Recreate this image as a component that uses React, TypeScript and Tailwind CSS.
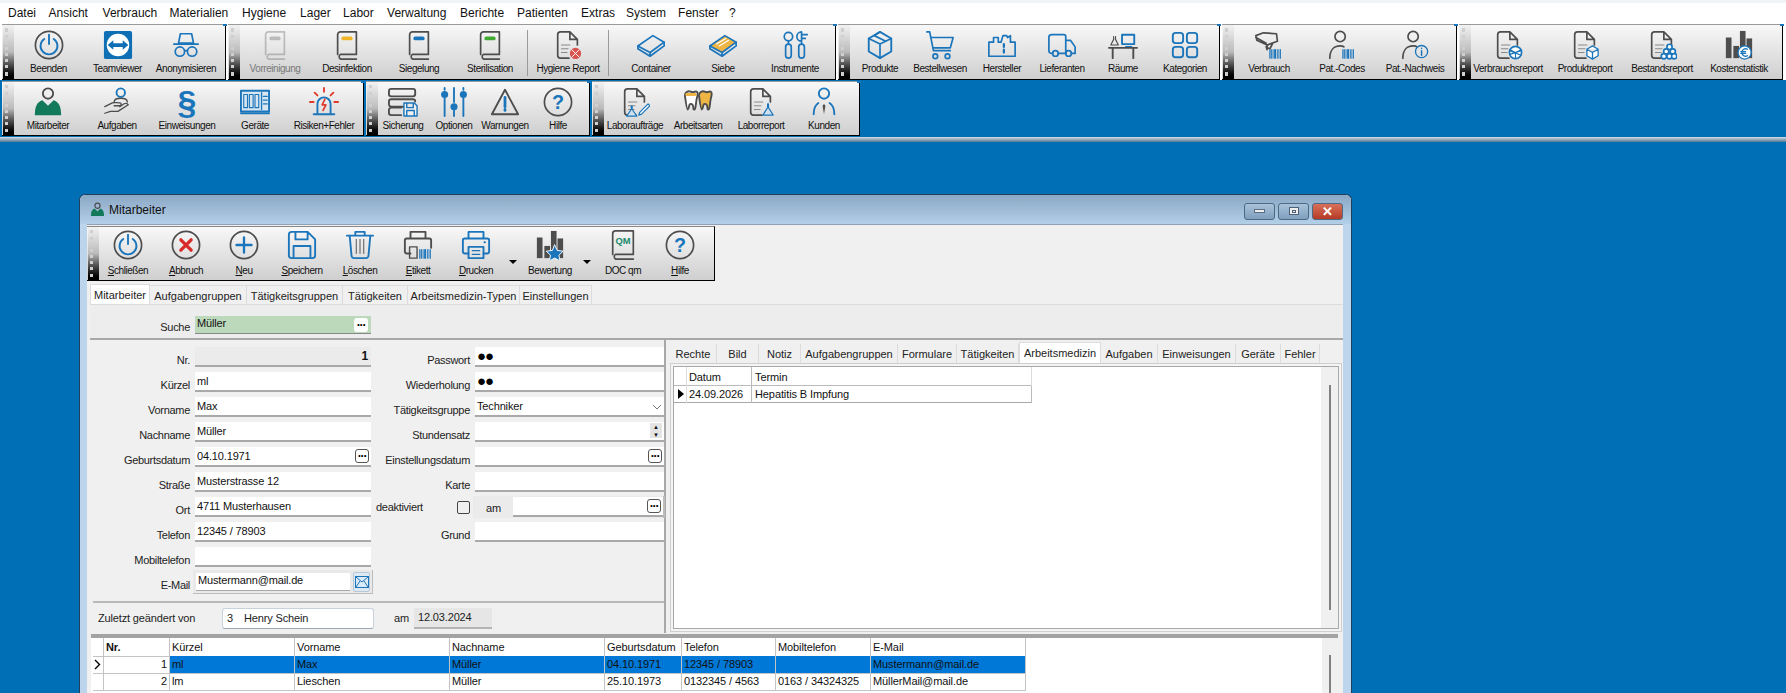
import React from 'react'

const G = '#4d4d4d'
const B = '#1b75bb'

const Svg = ({ children, size = 30 }: { children: React.ReactNode; size?: number }) => (
  <svg width={size} height={size} viewBox="0 0 32 32" fill="none" strokeWidth="1.8" strokeLinecap="round" strokeLinejoin="round">
    {children}
  </svg>
)

const Power = () => (
  <Svg><circle cx="16" cy="16" r="14.500" stroke={G} strokeWidth="1.800" /><path d="M11 9.5a9 9 0 1 0 10 0M16 5v10" stroke={B} strokeWidth="2" /></Svg>
)
const Teamviewer = () => (
  <Svg>
    <rect x="1" y="1" width="30" height="30" rx="2" fill="#0e6fb5" />
    <circle cx="16" cy="16" r="12" fill="#fff" />
    <path d="M5 16l6-5v3h10v-3l6 5-6 5v-3H11v3z" fill="#0e6fb5" />
  </Svg>
)
const Anon = () => (
  <Svg>
    <path d="M10 4h12l2 10H8zM3 15h26" stroke={B} />
    <circle cx="9.5" cy="23" r="5" stroke={B} /><circle cx="22.5" cy="23" r="5" stroke={B} />
    <path d="M14.5 22h3" stroke={B} />
  </Svg>
)
const Book = ({ c, s = G }: { c: string; s?: string }) => (
  <Svg>
    <path d="M6 26V5a3 3 0 0 1 3-3h17v24H9a3 3 0 0 0 0 5h17" stroke={s} strokeWidth="1.8" />
    <rect x="10" y="7" width="12" height="4" rx="2" fill={c} />
  </Svg>
)
const Doc = ({ children }: { children?: React.ReactNode }) => (
  <Svg>
    <path d="M18 2H8a3 3 0 0 0-3 3v22a3 3 0 0 0 3 3h9M18 2l8 8v6M18 2v8h8" stroke={G} />
    <path d="M9 16h9M9 20h7M9 24h6" stroke="#8a8a8a" strokeWidth="1.2" />
    {children}
  </Svg>
)
const HygReport = () => (
  <Doc><circle cx="24" cy="25" r="6" fill="#d9534f" /><path d="M20 29l8-8M20 21l8 8" stroke="#fff" strokeWidth="1" /></Doc>
)
const Tray = ({ fill = 'none' }: { fill?: string }) => (
  <Svg>
    <path d="M2 17L18 6l12 7-15 11z" stroke={B} fill={fill} />
    <path d="M2 17v3l13 8 15-11v-4M15 24v4" stroke={B} />
    {fill !== 'none' && <path d="M9 15l10-6M12 17l10-6" stroke="#fff" strokeWidth="1.2" />}
  </Svg>
)
const Instr = () => (
  <Svg>
    <circle cx="9" cy="7" r="4.5" stroke={B} /><rect x="6" y="15" width="6" height="15" rx="3" stroke={B} />
    <path d="M9 11.5V15" stroke={B} />
    <path d="M23 2a5 5 0 0 0 0 10zM23 5h6M23 9h4M23 12v3" stroke={B} />
    <rect x="20" y="15" width="6" height="15" rx="3" stroke={B} />
  </Svg>
)
const Cube = () => (
  <Svg>
    <path d="M16 2l12 7v14l-12 7-12-7V9z" stroke={B} strokeWidth="2" />
    <path d="M4 9l12 6 12-6M16 15v15M16 2l-6 4 12 6" stroke={B} />
  </Svg>
)
const Cart = () => (
  <Svg>
    <path d="M2 2h3l4 20h18M7 8h23l-3 11H9" stroke={B} />
    <circle cx="11" cy="28" r="2.5" stroke={B} /><circle cx="24" cy="28" r="2.5" stroke={B} />
  </Svg>
)
const Factory = () => (
  <Svg>
    <path d="M2 28V13h5V8h5v5h3l2-7h4l1 2 3-2v7h5v15z" stroke={B} />
    <path d="M18 15v3M18 21v3" stroke={B} strokeWidth="2.4" />
  </Svg>
)
const Truck = () => (
  <Svg>
    <path d="M6 25H5a3 3 0 0 1-3-3V8a3 3 0 0 1 3-3h13a2 2 0 0 1 2 2v18h-8M20 11h5l5 7v7h-4" stroke={B} />
    <circle cx="9" cy="25" r="3" stroke={B} /><circle cx="23" cy="25" r="3" stroke={B} />
  </Svg>
)
const Room = () => (
  <Svg>
    <rect x="15" y="5" width="13" height="10" stroke={B} strokeWidth="2" />
    <path d="M19 18h6" stroke={B} />
    <path d="M1 19h30M5 19v11M27 19v11" stroke={G} strokeWidth="2" />
    <path d="M6 7v3l-3 6h8l-3-6V7" stroke={G} strokeWidth="1.2" />
  </Svg>
)
const Cats = () => (
  <Svg>
    <rect x="3" y="3" width="11" height="11" rx="3" stroke={B} strokeWidth="2" />
    <rect x="18" y="3" width="11" height="11" rx="3" stroke={B} strokeWidth="2" />
    <rect x="3" y="18" width="11" height="11" rx="3" stroke={B} strokeWidth="2" />
    <rect x="18" y="18" width="11" height="11" rx="3" stroke={B} strokeWidth="2" />
  </Svg>
)
const Barcode = ({ x = 17 }: { x?: number }) => (
  <path d={`M${x} 21v9M${x + 2} 21v9M${x + 4.5} 21v9M${x + 6} 21v9M${x + 8.5} 21v9M${x + 11} 21v9`} stroke={B} strokeWidth="1.4" />
)
const Scanner = () => (
  <Svg>
    <path d="M2 6l8-3 14 1 1 8-11 4-11-5zM2 8l11 6M14 16l6-2-3 6-3-1zM15 16l-2 2 1 3" stroke={G} />
    <Barcode />
  </Svg>
)
const PatCode = () => (
  <Svg>
    <circle cx="14" cy="7" r="5.5" stroke={G} />
    <path d="M3 30c0-8 4-13 11-13 2 0 3 0 4 1" stroke={G} />
    <Barcode />
  </Svg>
)
const PatInfo = () => (
  <Svg>
    <circle cx="14" cy="7" r="5.5" stroke={G} />
    <path d="M3 30c0-8 4-13 11-13 2 0 3 0 4 1" stroke={G} />
    <circle cx="23" cy="23" r="6.5" stroke={B} strokeWidth="1.4" />
    <path d="M23 22v5M23 19.5v.2" stroke={B} strokeWidth="1.6" />
  </Svg>
)
const DocBox = () => (
  <Doc>
    <circle cx="24" cy="24" r="6.5" fill="#fff" stroke={B} />
    <path d="M18 21l6 3 6-3M24 24v6M18 26l12-4M18 22l12 5" stroke={B} strokeWidth="1.2" />
  </Doc>
)
const DocCube = () => (
  <Doc>
    <path d="M24 17l6 3.5v7L24 31l-6-3.500v-7zM18 20.500l6 3.500 6-3.500M24 24v7" stroke={B} fill="#fff" strokeWidth="1.4" />
  </Doc>
)
const DocStack = () => (
  <Doc>
    <circle cx="24" cy="18" r="2.800" stroke={B} fill="#fff" /><circle cx="20.500" cy="23" r="2.800" stroke={B} fill="#fff" />
    <circle cx="27.500" cy="23" r="2.800" stroke={B} fill="#fff" /><circle cx="18" cy="28" r="2.800" stroke={B} fill="#fff" />
    <circle cx="24" cy="28" r="2.800" stroke={B} fill="#fff" /><circle cx="29" cy="28" r="2.800" stroke={B} fill="#fff" />
  </Doc>
)
const Bars = ({ children }: { children?: React.ReactNode }) => (
  <Svg>
    <rect x="2" y="8" width="6" height="22" fill={G} /><rect x="10" y="17" width="6" height="13" fill={G} />
    <rect x="17" y="1" width="6" height="29" fill={G} /><rect x="24" y="9" width="6" height="21" fill={G} />
    {children}
  </Svg>
)
const Euro = () => (
  <Bars>
    <circle cx="22" cy="24" r="7" fill="#fff" stroke={B} strokeWidth="1.4" />
    <path d="M25 20.500a4 4 0 1 0 0 7M18 23h5M18 25h5" stroke={B} strokeWidth="1.4" />
  </Bars>
)
const Star = () => (
  <Bars><path d="M21 16l2.800 5.800 6.200.8-4.500 4.300 1.100 6-5.600-3-5.600 3 1.100-6-4.500-4.300 6.200-.8z" fill={B} stroke="#fff" strokeWidth="1" /></Bars>
)
const Worker = () => (
  <Svg>
    <circle cx="16" cy="7" r="5.500" stroke={G} strokeWidth="2" />
    <path d="M2 30c0-9 2-14 8-16l6 6 6-6c6 2 8 7 8 16z" fill="#127a5a" />
  </Svg>
)
const Hand = () => (
  <Svg>
    <circle cx="20" cy="6" r="4.500" stroke={B} strokeWidth="2" />
    <path d="M13 16c0-3 3-4 7-4s7 1 7 4M3 21l8-4c3-1 5 0 8 0 2 0 2 3 0 3h-6M3 28l6-2h8l11-7c-1-2-4-2-6 0l-3 2" stroke={G} strokeWidth="1.400" />
  </Svg>
)
const Paragraph = () => (
  <div className="h-[30px] flex items-center justify-center font-bold text-[34px] leading-[30px] text-[#1b75bb]">§</div>
)
const Oven = () => (
  <Svg>
    <rect x="1" y="4" width="30" height="22" stroke={B} strokeWidth="2" fill="#d8e6f2" />
    <path d="M1 28h30" stroke={B} strokeWidth="2" />
    <rect x="4" y="8" width="4" height="14" stroke={B} strokeWidth="1.200" />
    <rect x="10" y="8" width="4" height="14" stroke={B} strokeWidth="1.200" />
    <rect x="16" y="8" width="4" height="14" stroke={B} strokeWidth="1.200" />
    <path d="M23 6v18M25 10h4M25 14h4M25 18h4" stroke={B} strokeWidth="1.400" />
  </Svg>
)
const Alarm = () => (
  <Svg>
    <path d="M9 28V18a7 7 0 0 1 14 0v10M5 29h22" stroke={B} strokeWidth="2" />
    <path d="M17 13l-3 6h4l-3 6" stroke="#e03a2e" strokeWidth="1.800" />
    <path d="M16 1v4M6 6l3 3M26 6l-3 3M1 16h4M27 16h4" stroke="#e03a2e" strokeWidth="2" />
  </Svg>
)
const Backup = () => (
  <Svg>
    <rect x="1" y="2" width="28" height="8" rx="2.500" stroke={G} strokeWidth="2" />
    <path d="M18 21H3.500A2.500 2.500 0 0 1 1 18.500v-3A2.500 2.500 0 0 1 3.500 13H26.500A2.500 2.500 0 0 1 29 15.500M14 30H3.500A2.500 2.500 0 0 1 1 27.500v-3A2.500 2.500 0 0 1 3.500 22H14" stroke={G} strokeWidth="2" />
    <path d="M17 17h11l3 3v11H17zM20 17v5h7v-5M20 31v-6h8v6" stroke={B} strokeWidth="1.500" fill="#f0f0f0" />
  </Svg>
)
const Sliders = () => (
  <Svg>
    <path d="M6 1v2M6 12v19M16 1v15M16 25v6M26 1v2M26 12v19" stroke={B} strokeWidth="2" />
    <circle cx="6" cy="8" r="3.800" fill={B} /><circle cx="16" cy="21" r="3.800" fill={B} /><circle cx="26" cy="8" r="3.800" fill={B} />
  </Svg>
)
const Warn = () => (
  <Svg>
    <path d="M16 3L30 29H2z" stroke={G} strokeWidth="2" />
    <path d="M16 11v10M16 24v1" stroke={B} strokeWidth="3" />
  </Svg>
)
const Help = () => (
  <Svg>
    <circle cx="16" cy="16" r="14.500" stroke={G} strokeWidth="1.800" />
    <text x="16" y="23" textAnchor="middle" fontSize="21" fontWeight="700" fontFamily="Liberation Sans, sans-serif" fill={B}>?</text>
  </Svg>
)
const LabOrder = () => (
  <Doc>
    <path d="M12 20v4l-5 7h11l-5-7v-4" stroke={B} fill="#cfe0ee" strokeWidth="1.200" />
    <path d="M21 27l9-9 2 2-9 9-3 1z" stroke={B} strokeWidth="1.300" fill="#fff" />
  </Doc>
)
const Teeth = () => (
  <Svg>
    <path d="M2 9c0-4 4-5 6-4 2 1 3 1 5 0 3-1 3 3 2 6-1 3-1 8-2 12-1 2-2 1-2-1 0-2-1-4-3-4s-1 5-3 6c-1 0-2-8-3-15z" stroke={G} strokeWidth="2" fill="#fff" />
    <path d="M17 9c0-4 4-5 6-4 2 1 3 1 5 0 3-1 3 3 2 6-1 3-1 8-2 12-1 2-2 1-2-1 0-2-1-4-3-4s-1 5-3 6c-1 0-2-8-3-15z" stroke={G} strokeWidth="2" fill="#eeb544" />
    <path d="M4 8h9" stroke="#eeb544" strokeWidth="3" />
  </Svg>
)
const LabReport = () => (
  <Doc><path d="M23 18v4l-5 8h11l-5-8v-4" stroke={B} fill="#cfe0ee" strokeWidth="1.200" /></Doc>
)
const Customer = () => (
  <Svg>
    <circle cx="16" cy="7" r="5.500" stroke={B} strokeWidth="2" />
    <path d="M5 29c0-6 2-10 5-12M27 29c0-6-2-10-5-12" stroke={B} strokeWidth="2" />
    <path d="M16 18l-1.500 2 1.500 9 1.500-9z" fill={G} />
  </Svg>
)
const Cancel = () => (
  <Svg>
    <circle cx="16" cy="16" r="14.500" stroke={G} strokeWidth="1.800" />
    <path d="M10.500 10.500l11 11M21.500 10.500l-11 11" stroke="#d92a2a" strokeWidth="3.500" />
  </Svg>
)
const Plus = () => (
  <Svg>
    <circle cx="16" cy="16" r="14.500" stroke={G} strokeWidth="1.800" />
    <path d="M16 8v16M8 16h16" stroke={B} strokeWidth="2.500" />
  </Svg>
)
const Floppy = () => (
  <Svg>
    <path d="M2 5a3 3 0 0 1 3-3h17l8 8v17a3 3 0 0 1-3 3H5a3 3 0 0 1-3-3zM9 2v8h13V2M7 30V17h18v13" stroke={B} strokeWidth="2" />
  </Svg>
)
const Trash = () => (
  <Svg>
    <path d="M2 6h28M11 6V2h10v4M5 6l2 22a3 3 0 0 0 3 2h12a3 3 0 0 0 3-2l2-22" stroke={B} strokeWidth="2" />
    <path d="M12 10v15M16 10v15M20 10v15" stroke={G} strokeWidth="1" />
  </Svg>
)
const Printer = ({ c = B }: { c?: string }) => (
  <Svg>
    <path d="M8 9V2h16v7M8 25H4a2 2 0 0 1-2-2V11a2 2 0 0 1 2-2h24a2 2 0 0 1 2 2v12a2 2 0 0 1-2 2h-4" stroke={c} strokeWidth="2" />
    <rect x="8" y="18" width="16" height="12" stroke={c} strokeWidth="2" />
    <path d="M12 22h8M12 26h8" stroke={c} strokeWidth="1.200" />
    <path d="M25 13h.5" stroke={c} strokeWidth="2" />
  </Svg>
)
const Label = () => (
  <Svg>
    <path d="M8 9V2h16v7M8 25H4a2 2 0 0 1-2-2V11a2 2 0 0 1 2-2h24a2 2 0 0 1 2 2v8" stroke={G} strokeWidth="2" />
    <path d="M7 18v12h8V18z" stroke={G} strokeWidth="1.500" />
    <Barcode x={18} />
  </Svg>
)
const DocQm = () => (
  <Svg>
    <path d="M5 26V4a3 3 0 0 1 3-3h19v25H8a3 3 0 0 0 0 5h19" stroke={G} strokeWidth="1.800" />
    <text x="16" y="15" textAnchor="middle" fontSize="10" fontWeight="700" fontFamily="Liberation Sans, sans-serif" fill="#1b8a6b">QM</text>
  </Svg>
)

// toolbar button: width class places the label under its icon
const ToolBtn = ({ w, label, icon, dim, u, win }: { w: string; label: string; icon: React.ReactNode; dim?: boolean; u?: boolean; win?: boolean }) => (
  <div className={`${w} shrink-0 flex flex-col items-center ${win ? 'pt-[3px]' : 'pt-[5px]'} ${dim ? 'opacity-50' : ''}`}>
    <div className="h-[30px] flex items-center justify-center">{icon}</div>
    <span className={`${win ? 'mt-[4px]' : 'mt-[2px]'} text-[10px] leading-[13px] tracking-[-0.45px] text-[#111] whitespace-nowrap`}>
      {u ? <><span className="underline">{label[0]}</span>{label.slice(1)}</> : label}
    </span>
  </div>
)

const Grip = () => (
  <div className="w-[11px] shrink-0 ml-[1px] bg-linear-to-b from-[#f2f2f2] via-[#bbbbbb] to-black flex justify-start pl-[2px] py-[3px]">
    <div className="w-0 h-full border-l-[3px] border-dotted border-[#cfcfcf]" />
  </div>
)

const Sep = () => <div className="w-px h-[46px] mt-[5px] mx-[1px] shrink-0 bg-[#9a9a9a]" />

const Band = ({ w, children }: { w: string; children: React.ReactNode }) => (
  <div className={`${w} shrink-0 relative flex bg-linear-to-b from-[#f8f8f8] to-[#cfcfcf] border-t border-[#9a9a9a] border-r border-b border-r-black border-b-black`}>
    <Grip />
    {children}
    <div className="absolute -top-px -right-[2px] w-[4px] h-[2px] bg-[#1b75bb]" />
  </div>
)

const Menu = () => (
  <div className="h-[23px] shrink-0 bg-white border-t-[3px] border-[#f0f4f9] flex items-center pl-[8px] text-[12px] text-[#111]">
    <span className="w-[40.6px]">Datei</span>
    <span className="w-[54px]">Ansicht</span>
    <span className="w-[67px]">Verbrauch</span>
    <span className="w-[72.5px]">Materialien</span>
    <span className="w-[58px]">Hygiene</span>
    <span className="w-[43px]">Lager</span>
    <span className="w-[44px]">Labor</span>
    <span className="w-[73px]">Verwaltung</span>
    <span className="w-[57px]">Berichte</span>
    <span className="w-[64px]">Patienten</span>
    <span className="w-[45px]">Extras</span>
    <span className="w-[52px]">System</span>
    <span className="w-[51px]">Fenster</span>
    <span>?</span>
  </div>
)

const Toolbars = () => (
  <div className="shrink-0 flex flex-col gap-px h-[114px]">
    <div className="flex gap-[2px] h-[57px] pt-px bg-white pl-[2px]">
      <Band w="w-[224px]">
        <ToolBtn w="w-[69px]" label="Beenden" icon={<Power />} />
        <ToolBtn w="w-[69px]" label="Teamviewer" icon={<Teamviewer />} />
        <ToolBtn w="w-[68px]" label="Anonymisieren" icon={<Anon />} />
      </Band>
      <Band w="w-[608px]">
        <ToolBtn w="w-[70px]" label="Vorreinigung" icon={<Book c="#888" s="#888" />} dim />
        <ToolBtn w="w-[74px]" label="Desinfektion" icon={<Book c="#f0b429" />} />
        <ToolBtn w="w-[70px]" label="Siegelung" icon={<Book c="#1b75bb" />} />
        <ToolBtn w="w-[72px]" label="Sterilisation" icon={<Book c="#43a935" />} />
        <Sep />
        <ToolBtn w="w-[78px]" label="Hygiene Report" icon={<HygReport />} />
        <Sep />
        <ToolBtn w="w-[82px]" label="Container" icon={<Tray />} />
        <ToolBtn w="w-[62px]" label="Siebe" icon={<Tray fill="#eeb544" />} />
        <ToolBtn w="w-[82px]" label="Instrumente" icon={<Instr />} />
      </Band>
      <Band w="w-[382px]">
        <ToolBtn w="w-[60px]" label="Produkte" icon={<Cube />} />
        <ToolBtn w="w-[60px]" label="Bestellwesen" icon={<Cart />} />
        <ToolBtn w="w-[64px]" label="Hersteller" icon={<Factory />} />
        <ToolBtn w="w-[56px]" label="Lieferanten" icon={<Truck />} />
        <ToolBtn w="w-[66px]" label="Räume" icon={<Room />} />
        <ToolBtn w="w-[58px]" label="Kategorien" icon={<Cats />} />
      </Band>
      <Band w="w-[235px]">
        <ToolBtn w="w-[70px]" label="Verbrauch" icon={<Scanner />} />
        <ToolBtn w="w-[76px]" label="Pat.-Codes" icon={<PatCode />} />
        <ToolBtn w="w-[70px]" label="Pat.-Nachweis" icon={<PatInfo />} />
      </Band>
      <Band w="w-[324px]">
        <ToolBtn w="w-[74px]" label="Verbrauchsreport" icon={<DocBox />} />
        <ToolBtn w="w-[80px]" label="Produktreport" icon={<DocCube />} />
        <ToolBtn w="w-[74px]" label="Bestandsreport" icon={<DocStack />} />
        <ToolBtn w="w-[80px]" label="Kostenstatistik" icon={<Euro />} />
      </Band>
    </div>
    <div className="flex gap-[2px] h-[55px] pl-[2px]">
      <Band w="w-[362px]">
        <ToolBtn w="w-[68px]" label="Mitarbeiter" icon={<Worker />} />
        <ToolBtn w="w-[70px]" label="Aufgaben" icon={<Hand />} />
        <ToolBtn w="w-[70px]" label="Einweisungen" icon={<Paragraph />} />
        <ToolBtn w="w-[66px]" label="Geräte" icon={<Oven />} />
        <ToolBtn w="w-[72px]" label="Risiken+Fehler" icon={<Alarm />} />
      </Band>
      <Band w="w-[224px]">
        <ToolBtn w="w-[50px]" label="Sicherung" icon={<Backup />} />
        <ToolBtn w="w-[52px]" label="Optionen" icon={<Sliders />} />
        <ToolBtn w="w-[50px]" label="Warnungen" icon={<Warn />} />
        <ToolBtn w="w-[56px]" label="Hilfe" icon={<Help />} />
      </Band>
      <Band w="w-[268px]">
        <ToolBtn w="w-[62px]" label="Laboraufträge" icon={<LabOrder />} />
        <ToolBtn w="w-[64px]" label="Arbeitsarten" icon={<Teeth />} />
        <ToolBtn w="w-[62px]" label="Laborreport" icon={<LabReport />} />
        <ToolBtn w="w-[64px]" label="Kunden" icon={<Customer />} />
      </Band>
    </div>
  </div>
)

const Dots = ({ className = '' }: { className?: string }) => (
  <span className={`w-[14px] h-[14px] shrink-0 flex items-center justify-center rounded-[3px] bg-white border border-[#555] text-[12px] leading-none font-bold text-black ${className}`}>
    <span className="-mt-[6px] tracking-[-0.5px]">...</span>
  </span>
)

const Input = ({ w = 'w-[176px]', children, right, align, bg = 'bg-white' }: { w?: string; children?: React.ReactNode; right?: React.ReactNode; align?: string; bg?: string }) => (
  <div className={`${w} ${bg} h-[20px] shrink-0 flex items-start justify-between pl-[2px] pr-[2px] pt-[2px] border-b-2 border-[#a9a9a9] text-[11px] leading-[14px] tracking-[-0.15px] text-[#111] ${align ?? ''}`}>
    <span>{children}</span>
    {right}
  </div>
)

const Row = ({ label, lw = 'w-[97px]', children }: { label: string; lw?: string; children: React.ReactNode }) => (
  <div className="flex h-[20px] gap-[5px]">
    <span className={`${lw} shrink-0 text-right text-[11px] tracking-[-0.3px] leading-[14px] pt-[6px] text-[#222] whitespace-nowrap`}>{label}</span>
    {children}
  </div>
)

const Pw = () => <span className="text-[15px] leading-[13px] tracking-[-1px] text-black">●●</span>

const Form = () => (
  <div className="h-[258px] shrink-0 flex gap-[5px] pt-[7px] bg-[#f0f0f0]">
    <div className="flex flex-col gap-[5px]">
      <Row label="Nr."><Input bg="bg-[#ebebeb]" right={<span className="font-bold text-[12px] pr-[1px]">1</span>} /></Row>
      <Row label="Kürzel"><Input>ml</Input></Row>
      <Row label="Vorname"><Input>Max</Input></Row>
      <Row label="Nachname"><Input>Müller</Input></Row>
      <Row label="Geburtsdatum"><Input right={<Dots />}>04.10.1971</Input></Row>
      <Row label="Straße"><Input>Musterstrasse 12</Input></Row>
      <Row label="Ort"><Input>4711 Musterhausen</Input></Row>
      <Row label="Telefon"><Input>12345 / 78903</Input></Row>
      <Row label="Mobiltelefon"><Input /></Row>
      <Row label="E-Mail">
        <div className="w-[180px] -ml-[2px] -mr-[2px] -mt-[2px] h-[24px] flex items-center gap-[3px] pl-[3px] border-b border-r border-[#bdbdbd] bg-[#e9e9e9]">
          <div className="w-[154px] h-[18px] bg-white border-b border-[#a9a9a9] pl-[2px] text-[11px] leading-[14px] tracking-[-0.15px] text-[#111]">Mustermann@mail.de</div>
          <div className="w-[17px] h-[20px] flex items-center justify-center bg-[#dfe9f2] rounded-[2px] border border-[#b5c7d8]">
            <svg width="14" height="12" viewBox="0 0 14 12" fill="#dcebf7" stroke="#1b75bb"><rect x="0.500" y="0.500" width="13" height="11" /><path d="M1 1l6 5 6-5M1 11l4-6M13 11L9 5" fill="none" /></svg>
          </div>
        </div>
      </Row>
    </div>
    <div className="flex flex-col gap-[5px]">
      <Row label="Passwort" lw="w-[94px]"><Input w="w-[189px]"><Pw /></Input></Row>
      <Row label="Wiederholung" lw="w-[94px]"><Input w="w-[189px]"><Pw /></Input></Row>
      <Row label="Tätigkeitsgruppe" lw="w-[94px]">
        <Input w="w-[189px]" right={<svg width="10" height="14" viewBox="0 0 10 14" fill="none" stroke="#777"><path d="M1 6l4 4 4-4" /></svg>}>Techniker</Input>
      </Row>
      <Row label="Stundensatz" lw="w-[94px]">
        <Input w="w-[189px]" right={
          <span className="w-[12px] h-[15px] -mt-[1px] flex flex-col bg-[#e4e4e4] text-[6px] leading-[8px] text-center text-[#111]"><span>▲</span><span>▼</span></span>
        } />
      </Row>
      <Row label="Einstellungsdatum" lw="w-[94px]"><Input w="w-[189px]" right={<Dots />} /></Row>
      <Row label="Karte" lw="w-[94px]"><Input w="w-[189px]" /></Row>
      <div className="flex h-[20px] items-center">
        <span className="w-[81px] text-[11px] tracking-[-0.3px] text-[#222]">deaktiviert</span>
        <span className="w-[13px] h-[13px] shrink-0 rounded-[2px] border border-[#444] bg-[#f0f0f0]" />
        <div className="ml-[3px] w-[192px] h-[22px] flex items-center border-r-2 border-[#bdbdbd] bg-[#ebebeb]">
          <span className="w-[40px] pl-[13px] pt-[3px] text-[11px] text-[#222]">am</span>
          <Input w="w-[150px]" right={<Dots />} />
        </div>
      </div>
      <Row label="Grund" lw="w-[94px]"><Input w="w-[189px]" /></Row>
    </div>
  </div>
)

const Changed = () => (
  <div className="h-[32px] mt-[3px] flex items-center pl-[5px] border-t-2 border-[#b9b9b9] text-[11px] tracking-[-0.15px] text-[#222]">
    <span className="w-[124px]">Zuletzt geändert von</span>
    <div className="w-[152px] h-[21px] flex items-center pl-[4px] gap-[11px] rounded-[3px] bg-white border border-[#c8d2dc] border-b-[#9aa9b8]">
      <span>3</span><span>Henry Schein</span>
    </div>
    <span className="ml-[20px] w-[20px]">am</span>
    <div className="w-[78px] h-[21px] flex items-center pl-[4px] bg-[#e6e6e6] border-b-2 border-[#b5b5b5]">12.03.2024</div>
  </div>
)

const subTabs = [
  { t: 'Rechte', w: 'w-[47px]' }, { t: 'Bild', w: 'w-[42px]' }, { t: 'Notiz', w: 'w-[42px]' },
  { t: 'Aufgabengruppen', w: 'w-[97px]' }, { t: 'Formulare', w: 'w-[59px]' }, { t: 'Tätigkeiten', w: 'w-[62px]' },
  { t: 'Arbeitsmedizin', w: 'w-[82px]', on: true }, { t: 'Aufgaben', w: 'w-[57px]' }, { t: 'Einweisungen', w: 'w-[78px]' },
  { t: 'Geräte', w: 'w-[45px]' }, { t: 'Fehler', w: 'w-[39px]' },
]

const DetailPanel = () => (
  <div className="flex-1 pl-[4px] pt-[4px] pr-[1px] flex flex-col">
    <div className="h-[19px] shrink-0 flex items-stretch">
      {subTabs.map((s) => (
        <span key={s.t} className={`${s.w} shrink-0 text-center text-[11px] leading-[20px] text-[#222] border-r border-[#dcdcdc] ${s.on ? '-mt-[2px] bg-white border-t border-l border-[#cfcfcf]' : ''}`}>{s.t}</span>
      ))}
    </div>
    <div className="h-[269px] shrink-0 p-[2px] border border-[#cfcfcf] bg-[#f4f4f4]">
      <div className="h-full flex bg-white border border-[#a8a8a8]">
        <div className="w-[358px] text-[11px] tracking-[-0.1px] text-[#111]">
          <div className="grid grid-cols-[13px_65px_280px] h-[19px] border-b border-[#bbbbbb]">
            <span className="border-r border-[#dcdcdc]" />
            <span className="pl-[2px] pt-[2px] border-r border-[#bbbbbb]">Datum</span>
            <span className="pl-[3px] pt-[2px] border-r border-[#dcdcdc]">Termin</span>
          </div>
          <div className="grid grid-cols-[13px_65px_280px] h-[17px] border-b border-[#a8a8a8]">
            <span className="border-r border-[#dcdcdc] flex items-center pl-[4px]"><span className="w-0 h-0 border-y-[5px] border-y-transparent border-l-[6px] border-l-black" /></span>
            <span className="pl-[2px] border-r border-[#bbbbbb]">24.09.2026</span>
            <span className="pl-[3px] border-r border-[#bbbbbb]">Hepatitis B Impfung</span>
          </div>
        </div>
        <div className="flex-1" />
        <div className="w-[17px] shrink-0 bg-[#f0f0f0] flex justify-center pt-[18px] pb-[18px]">
          <div className="w-[2px] h-[225px] bg-[#808080]" />
        </div>
      </div>
    </div>
  </div>
)

const gridCols = 'grid grid-cols-[11px_66px_125px_155px_155px_77px_94px_95px_155px]'
const cell = 'px-[2px] border-r border-b border-[#c4c4c4] whitespace-nowrap'

const Chevron = () => (
  <svg width="7" height="11" viewBox="0 0 7 11" fill="none" stroke="#000" strokeWidth="1.400"><path d="M1 1l4.500 4.500L1 10" /></svg>
)

const EmployeeGrid = () => (
  <div className="flex ml-px mr-[5px] mt-px h-[59px] shrink-0 bg-white border-t-4 border-[#a3a3a3] text-[11px] tracking-[-0.1px] text-[#111]">
    <div className="w-[933px] ml-[2px] shrink-0">
      <div className={`${gridCols} h-[18px] items-stretch leading-[18px]`}>
        <span className={cell} />
        <span className={`${cell} font-bold`}>Nr.</span>
        <span className={cell}>Kürzel</span><span className={cell}>Vorname</span><span className={cell}>Nachname</span>
        <span className={cell}>Geburtsdatum</span><span className={cell}>Telefon</span><span className={cell}>Mobiltelefon</span><span className={cell}>E-Mail</span>
      </div>
      <div className={`${gridCols} h-[17px] leading-[17px]`}>
        <span className={`${cell} flex items-center !px-[1px]`}><Chevron /></span>
        <span className={`${cell} text-right`}>1</span>
        <span className={`${cell} bg-[#0078d7]`}>ml</span><span className={`${cell} bg-[#0078d7]`}>Max</span><span className={`${cell} bg-[#0078d7]`}>Müller</span>
        <span className={`${cell} bg-[#0078d7]`}>04.10.1971</span><span className={`${cell} bg-[#0078d7]`}>12345 / 78903</span><span className={`${cell} bg-[#0078d7]`} /><span className={`${cell} bg-[#0078d7]`}>Mustermann@mail.de</span>
      </div>
      <div className={`${gridCols} h-[17px] leading-[17px]`}>
        <span className={cell} />
        <span className={`${cell} text-right`}>2</span>
        <span className={cell}>lm</span><span className={cell}>Lieschen</span><span className={cell}>Müller</span>
        <span className={cell}>25.10.1973</span><span className={cell}>0132345 / 4563</span><span className={cell}>0163 / 34324325</span><span className={cell}>MüllerMail@mail.de</span>
      </div>
    </div>
    <div className="flex-1" />
    <div className="w-[16px] shrink-0 bg-[#f0f0f0] flex justify-center pt-[17px] overflow-hidden">
      <div className="w-[2px] h-[60px] bg-[#808080]" />
    </div>
  </div>
)

const tabs = [
  { t: 'Mitarbeiter', w: 'w-[60px]', on: true }, { t: 'Aufgabengruppen', w: 'w-[97px]' }, { t: 'Tätigkeitsgruppen', w: 'w-[96px]' },
  { t: 'Tätigkeiten', w: 'w-[65px]' }, { t: 'Arbeitsmedizin-Typen', w: 'w-[112px]' }, { t: 'Einstellungen', w: 'w-[72px]' },
]

const WinBtn = ({ className, children }: { className: string; children: React.ReactNode }) => (
  <div className={`w-[31px] h-[17px] rounded-[3px] border border-[#4d6a85] flex items-center justify-center ${className}`}>{children}</div>
)

const DropArrow = ({ w = 'w-[16px]' }: { w?: string }) => (
  <div className={`${w} shrink-0 flex justify-center pt-[33px]`}>
    <span className="w-0 h-0 border-x-[4px] border-x-transparent border-t-[4px] border-t-black" />
  </div>
)

const Window = () => (
  <div className="ml-[79px] mt-[52px] w-[1273px] h-[520px] shrink-0 flex flex-col pl-[7px] pr-[8px] rounded-t-[6px] border-t border-l border-r border-[#1f3f5c] bg-[#bcd5ec]">
    <div className="h-[29px] -ml-[7px] -mr-[8px] pl-[10px] pr-[8px] shrink-0 flex items-center justify-between rounded-t-[6px] bg-linear-to-b from-[#8aa7c4] to-[#b4cfe8]">
      <div className="flex items-center gap-[4px] text-[12px] text-[#111]">
        <svg width="15" height="15" viewBox="0 0 32 32" fill="none"><circle cx="16" cy="8" r="5.500" stroke="#4d4d4d" strokeWidth="2.500" /><path d="M2 30c0-9 2-14 8-16l6 6 6-6c6 2 8 7 8 16z" fill="#127a5a" /></svg>
        <span>Mitarbeiter</span>
      </div>
      <div className="flex gap-[3px] mt-[3px]">
        <WinBtn className="bg-linear-to-b from-[#a9c2da] to-[#7f9fbe]"><span className="w-[11px] h-[4px] bg-[#eee] border border-[#5a6f84]" /></WinBtn>
        <WinBtn className="bg-linear-to-b from-[#a9c2da] to-[#7f9fbe]"><span className="w-[10px] h-[8px] bg-[#eee] border border-[#4d6278] flex items-center justify-center"><span className="w-[4px] h-[3px] border border-[#4d6278]" /></span></WinBtn>
        <WinBtn className="bg-linear-to-b from-[#d9705a] to-[#b53a25] text-white text-[13px] font-bold leading-none">✕</WinBtn>
      </div>
    </div>
    <div className="flex-1 bg-[#f0f0f0] border-t border-[#8fa1b3] pt-px flex flex-col">
      <div className="w-[628px] h-[55px] shrink-0 flex bg-linear-to-b from-[#f8f8f8] to-[#cfcfcf] border-r border-b border-t border-[#888] border-r-black border-b-black">
        <Grip />
        <ToolBtn win w="w-[58px]" label="Schließen" icon={<Power />} u />
        <ToolBtn win w="w-[58px]" label="Abbruch" icon={<Cancel />} u />
        <ToolBtn win w="w-[58px]" label="Neu" icon={<Plus />} u />
        <ToolBtn win w="w-[58px]" label="Speichern" icon={<Floppy />} u />
        <ToolBtn win w="w-[58px]" label="Löschen" icon={<Trash />} u />
        <ToolBtn win w="w-[58px]" label="Etikett" icon={<Label />} u />
        <ToolBtn win w="w-[58px]" label="Drucken" icon={<Printer />} u />
        <DropArrow />
        <ToolBtn win w="w-[58px]" label="Bewertung" icon={<Star />} />
        <DropArrow />
        <ToolBtn win w="w-[56px]" label="DOC qm" icon={<DocQm />} />
        <ToolBtn win w="w-[58px]" label="Hilfe" icon={<Help />} u />
      </div>
      <div className="h-[19px] mt-[4px] ml-[3px] flex shrink-0">
        {tabs.map((t) => (
          <span key={t.t} className={`${t.w} shrink-0 text-center text-[11px] leading-[20px] text-[#222] border-t border-r border-[#dcdcdc] ${t.on ? '-mt-[1px] bg-white border-l' : ''}`}>{t.t}</span>
        ))}
      </div>
      <div className="flex-1 ml-[3px] border-t border-[#dcdcdc] flex flex-col">
        <div className="h-[35px] shrink-0 flex items-end gap-[5px] pl-[3px] pb-[4px] border-b-2 border-[#a8a8a8] bg-[#ededed]">
          <span className="w-[97px] text-right text-[11px] leading-[14px] tracking-[-0.3px] text-[#222]">Suche</span>
          <div className="w-[176px] h-[18px] flex items-start justify-between pl-[2px] pr-[3px] bg-[#bcd9bc] border-b border-[#888] text-[11px] leading-[14px] tracking-[-0.15px] text-[#111]">
            <span>Müller</span><Dots className="mt-[2px] border-0" />
          </div>
        </div>
        <div className="flex h-[293px] shrink-0">
          <div className="w-[573px] ml-[3px] shrink-0 border-r-2 border-[#a8a8a8] flex flex-col">
            <Form />
            <Changed />
          </div>
          <DetailPanel />
        </div>
        <EmployeeGrid />
      </div>
    </div>
  </div>
)

export default function App() {
  return (
    <div className="w-[1786px] h-[693px] overflow-hidden flex flex-col bg-[#006fb5] font-['Liberation_Sans',sans-serif]">
      <Menu />
      <Toolbars />
      <div className="h-[5px] shrink-0 bg-linear-to-b from-[#d4dde4] to-[#557a96]" />
      <Window />
    </div>
  )
}
